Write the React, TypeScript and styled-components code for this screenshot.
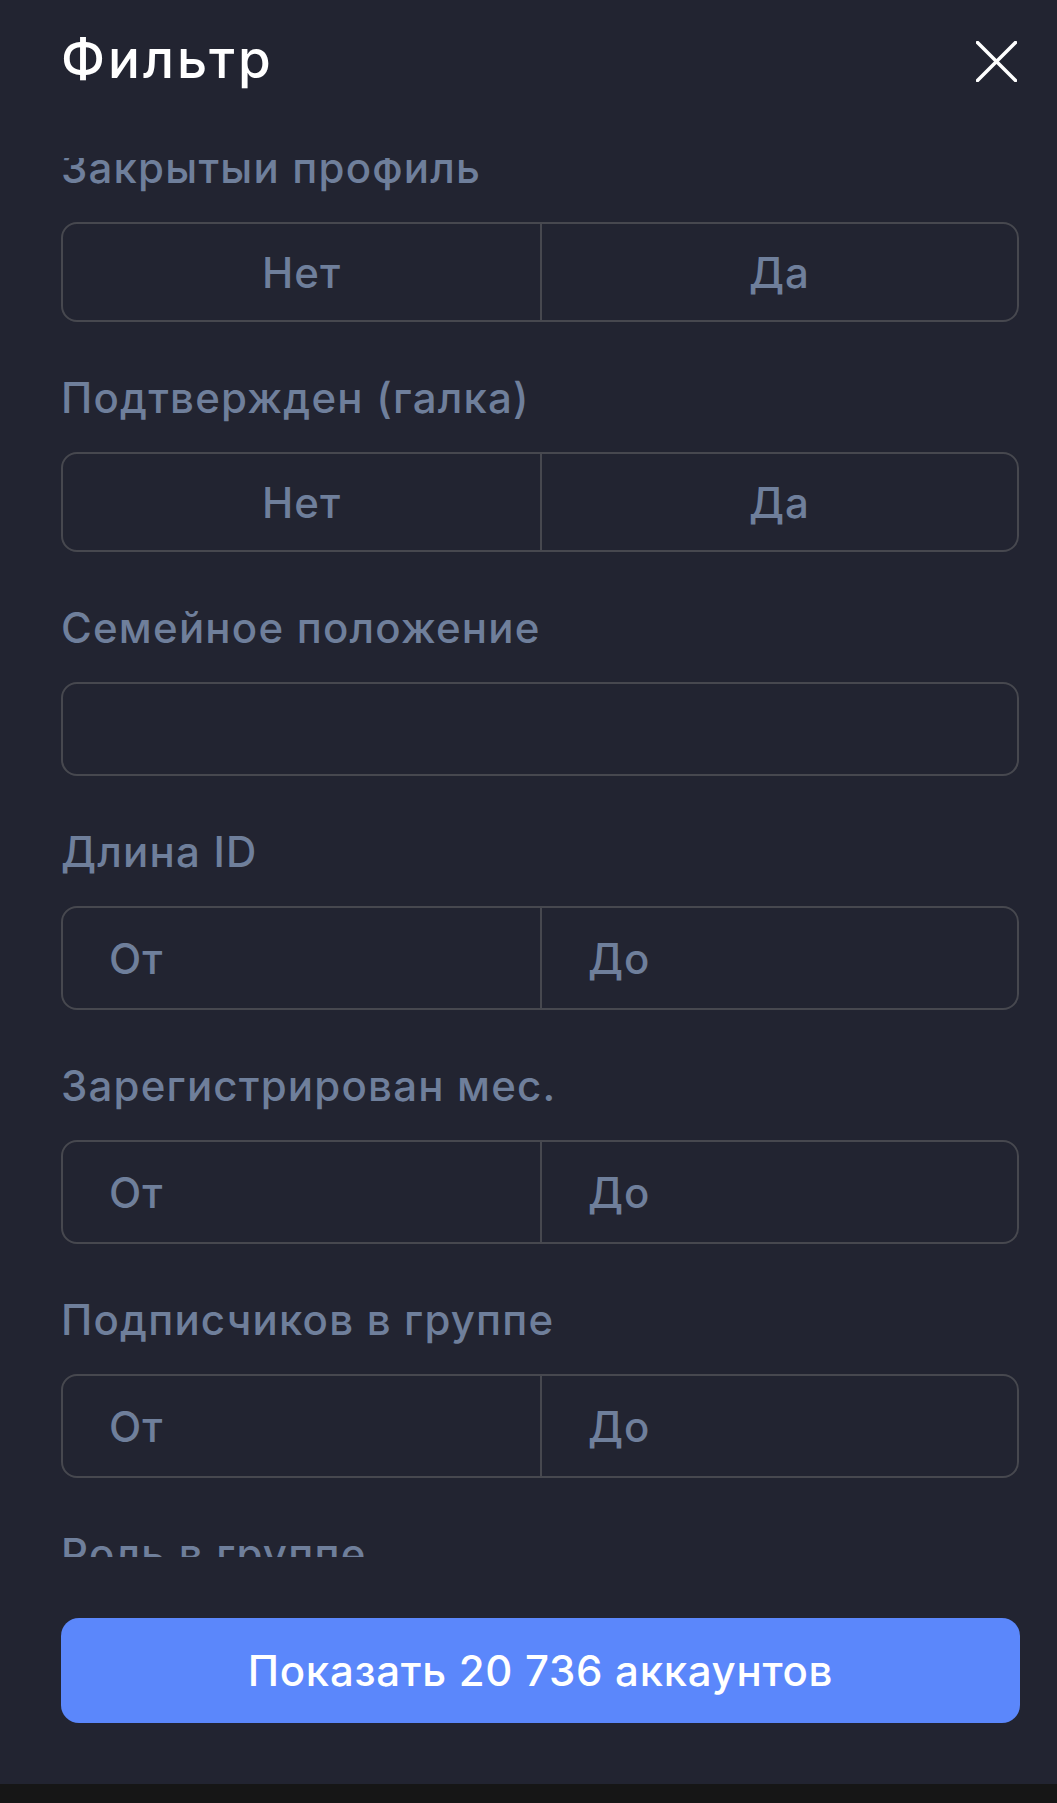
import React, { useLayoutEffect, useRef } from 'react';
import styled, { createGlobalStyle } from 'styled-components';

const GlobalStyle = createGlobalStyle`
  html, body {
    margin: 0;
    padding: 0;
    height: 100%;
    background: #222431;
  }
  #root {
    height: 100%;
  }
  * {
    box-sizing: border-box;
  }
`;

const Screen = styled.div`
  height: 100vh;
  display: flex;
  flex-direction: column;
  background: #222431;
  font-family: Inter, "Noto Sans", sans-serif;
`;

const Header = styled.header`
  height: 158px;
  flex-shrink: 0;
  display: flex;
  justify-content: space-between;
  align-items: flex-start;
  padding: 29px 40px 0 61px;
`;

const Title = styled.h1`
  margin: 0;
  font-size: 53px;
  line-height: 60px;
  font-weight: 500;
  letter-spacing: 3px;
  color: #ffffff;
`;

const CloseButton = styled.button`
  margin-top: 12px;
  padding: 0;
  width: 41px;
  height: 41px;
  border: none;
  background: none;
  display: flex;
  cursor: pointer;
`;

const ScrollArea = styled.div`
  flex: 1;
  overflow-y: auto;
  padding: 0 38px 0 61px;
  scrollbar-width: none;

  &::-webkit-scrollbar {
    display: none;
  }
`;

const Field = styled.div`
  margin-bottom: 52px;
`;

const Label = styled.div`
  font-size: 42px;
  line-height: 48px;
  font-weight: 500;
  letter-spacing: 1.2px;
  color: #6f7f9b;
  margin-bottom: 30px;
`;

const Segmented = styled.div<{ $height: number }>`
  display: grid;
  grid-template-columns: 1fr 1fr;
  height: ${p => p.$height}px;
  border: 2px solid #47484f;
  border-radius: 16px;
  overflow: hidden;
`;

const Segment = styled.div<{ $centered?: boolean }>`
  display: flex;
  align-items: center;
  justify-content: ${p => (p.$centered ? 'center' : 'flex-start')};
  padding-left: ${p => (p.$centered ? 0 : 46)}px;
  font-size: 42px;
  font-weight: 500;
  letter-spacing: 1px;
  color: #6f7f9b;

  & + & {
    border-left: 2px solid #47484f;
  }
`;

const RangeInput = styled.input`
  width: 100%;
  height: 100%;
  border: none;
  outline: none;
  background: transparent;
  padding: 0 0 0 46px;
  font: inherit;
  font-size: 42px;
  font-weight: 500;
  letter-spacing: 1px;
  color: #c7d0de;

  &::placeholder {
    color: #6f7f9b;
    opacity: 1;
  }

  & + & {
    border-left: 2px solid #47484f;
  }
`;

const SelectBox = styled.div`
  height: 94px;
  border: 2px solid #47484f;
  border-radius: 16px;
`;

const Footer = styled.footer`
  flex-shrink: 0;
  padding: 61px 37px 61px 61px;
`;

const SubmitButton = styled.button`
  width: 100%;
  height: 105px;
  border: none;
  border-radius: 18px;
  background: #5b87fb;
  color: #ffffff;
  font-family: inherit;
  font-size: 42px;
  font-weight: 500;
  letter-spacing: 0.7px;
  cursor: pointer;
`;

const NavBar = styled.div`
  height: 19px;
  flex-shrink: 0;
  background: #161616;
`;

function ToggleField({ label }: { label: string }) {
  return (
    <Field>
      <Label>{label}</Label>
      <Segmented $height={100}>
        <Segment $centered>Нет</Segment>
        <Segment $centered>Да</Segment>
      </Segmented>
    </Field>
  );
}

function RangeField({ label }: { label: string }) {
  return (
    <Field>
      <Label>{label}</Label>
      <Segmented $height={104}>
        <RangeInput placeholder="От" />
        <RangeInput placeholder="До" />
      </Segmented>
    </Field>
  );
}

export default function App() {
  const scrollRef = useRef<HTMLDivElement>(null);

  // list is shown already scrolled a bit
  useLayoutEffect(() => {
    if (scrollRef.current) scrollRef.current.scrollTop = 14;
  }, []);

  return (
    <>
      <GlobalStyle />
      <Screen>
        <Header>
          <Title>Фильтр</Title>
          <CloseButton aria-label="Закрыть">
            <svg width="41" height="41" viewBox="0 0 41 41">
              <path d="M1.5 1.5 L39.5 39.5 M39.5 1.5 L1.5 39.5" stroke="#fff" strokeWidth="3.5" strokeLinecap="round" />
            </svg>
          </CloseButton>
        </Header>
        <ScrollArea ref={scrollRef}>
          <ToggleField label="Закрытый профиль" />
          <ToggleField label="Подтвержден (галка)" />
          <Field>
            <Label>Семейное положение</Label>
            <SelectBox />
          </Field>
          <RangeField label="Длина ID" />
          <RangeField label="Зарегистрирован мес." />
          <RangeField label="Подписчиков в группе" />
          <ToggleField label="Роль в группе" />
        </ScrollArea>
        <Footer>
          <SubmitButton>Показать 20 736 аккаунтов</SubmitButton>
        </Footer>
        <NavBar />
      </Screen>
    </>
  );
}
